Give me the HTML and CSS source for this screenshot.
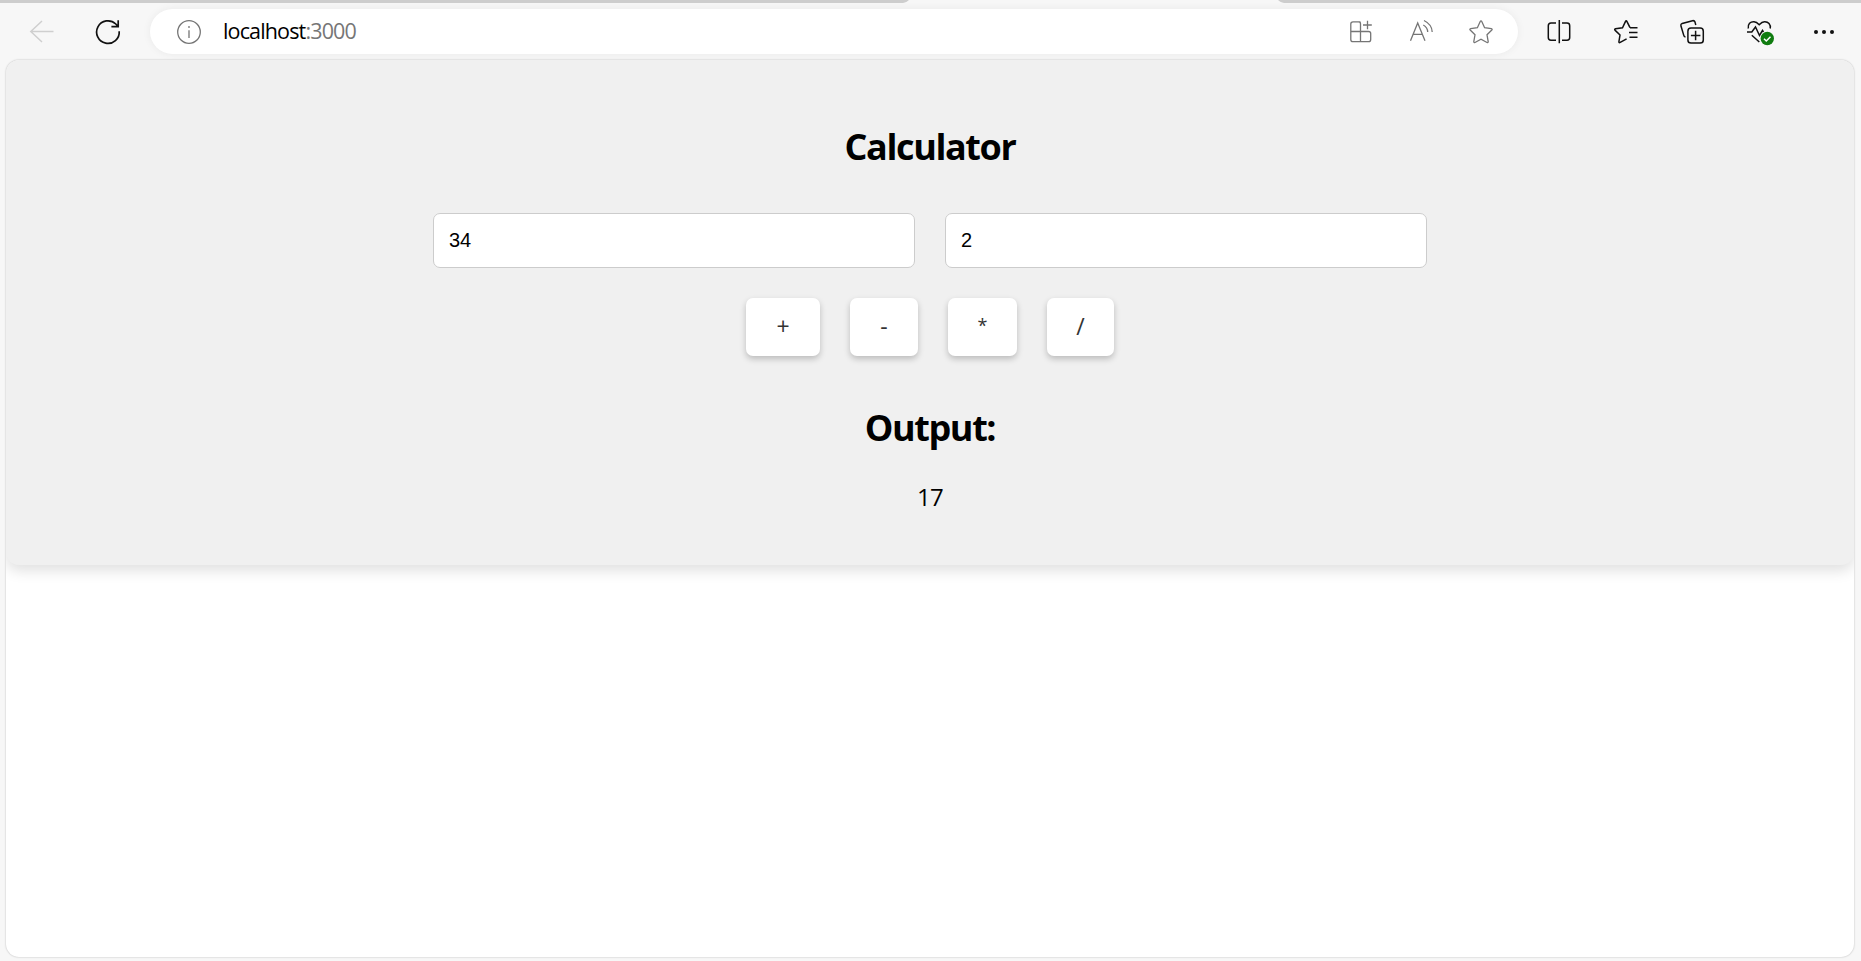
FILE: index.html
```html
<!DOCTYPE html>
<html lang="en">
<head>
<meta charset="utf-8">
<title>Calculator</title>
<link rel="stylesheet" href="styles.css">
</head>
<body>
<div class="browser">
  <div class="tabs">
    <svg class="tab-left" viewBox="0 0 909 3"><path d="M0 0H909Q906 3 903 3H0Z"/></svg>
    <svg class="tab-right" viewBox="0 0 583 3"><path d="M0 0H583V3H6Q3 3 0 0Z"/></svg>
  </div>
  <header class="toolbar">
    <svg class="icon back" viewBox="0 0 24 24"><path d="M23.5 11.5H.8M12 1 .8 11.5 12 22"/></svg>
    <svg class="icon reload" viewBox="0 0 24 24"><path d="M23.2 11.2A11.3 11.3 0 1 1 19.8 4L22 6.3M22.2.3V6.7H15.4"/></svg>
    <div class="address">
      <svg class="icon info" viewBox="0 0 24 24"><circle cx="12" cy="12" r="11.3"/><path d="M12 10.2V18M12 6V8"/></svg>
      <span class="url">localhost<span class="port">:3000</span></span>
      <div class="address-tools">
        <svg class="icon" viewBox="0 0 24 24"><path d="M11.5 1.8H4Q1.8 1.8 1.8 4V19.5Q1.8 21.7 4 21.7H19.5Q21.7 21.7 21.7 19.5V13.5Q21.7 11.5 19.5 11.5H1.8M11.5 21.7V3.8Q11.5 1.8 9.5 1.8M18.5.7V9.2M14 5H22.8"/></svg>
        <svg class="icon" viewBox="0 0 24 24"><path d="M1.5 20.8 8.7 3 16 20.8M4.2 14.3H13.3M14.3 5Q18.6 7.3 18.7 12M15 .5Q23 4.5 23.2 12"/></svg>
        <svg class="icon" viewBox="0 0 24 24"><path d="M12 .9Q12.5.9 12.9 1.7L15.6 7.7 22.3 8.6Q23.7 9 22.8 10L18 14.8 19.2 21.6Q19.1 22.9 18 22.5L12 19.3 6 22.5Q4.9 22.9 4.8 21.6L6 14.8 1.2 10Q.3 9 1.7 8.6L8.4 7.7 11.1 1.7Q11.5.9 12 .9Z"/></svg>
      </div>
    </div>
    <div class="actions">
      <svg class="icon" viewBox="0 0 24 24"><path d="M9 3H4Q1.3 3 1.3 5.7V17.5Q1.3 20.2 4 20.2H9M15 3H20Q22.7 3 22.7 5.7V17.5Q22.7 20.2 20 20.2H15M12.3 0V23.3"/></svg>
      <svg class="icon" viewBox="0 0 24 24"><path d="M16 7.7 13 1.6Q12.2 0 11.4 1.6L8.5 7.7 1.5 8.8Q0 9.2 1.2 10.4L6 15 4.9 21.7Q4.9 23.1 6.2 22.4L12.6 18.9M16 7.7H23.5M15 12.4H23.5M15.5 17.2H23.5"/></svg>
      <svg class="icon" viewBox="0 0 24 24"><path d="M5.5 17.1Q4.1 16.7 3.7 15.1L.9 5.8Q.5 4 2.2 3.4L12.5.7Q14.4.3 15 2.1L15.8 5M11 8.1H20.2Q23.3 8.1 23.3 11.2V19.9Q23.3 23 20.2 23H11Q7.9 23 7.9 19.9V11.2Q7.9 8.1 11 8.1ZM15.6 10.8V20.2M10.9 15.5H20.4"/></svg>
      <svg class="icon health" viewBox="0 0 27 24"><path d="M1.3 8.5C.5 4 3.5 1.5 7 1.7Q9.5 1.8 12.2 4.7Q15 1.8 17.5 1.7C21.2 1.5 24 4.3 23.2 8.5M0 12H4.8L8.5 7 12.5 15.5 15.5 10.5 16.5 12M4.8 15.3 12.3 22"/><circle class="badge" cx="20.3" cy="18.5" r="6.7"/><path class="tick" d="M17 18.7 19.3 21 23.5 16.8"/></svg>
      <svg class="icon dots" viewBox="0 0 24 24"><circle cx="4" cy="12" r="2"/><circle cx="12" cy="12" r="2"/><circle cx="20" cy="12" r="2"/></svg>
    </div>
  </header>
  <main class="page">
    <section class="calculator">
      <h1 class="title">Calculator</h1>
      <div class="inputs">
        <input class="field" type="text" value="34">
        <input class="field" type="text" value="2">
      </div>
      <div class="operators">
        <button class="op plus">+</button>
        <button class="op minus">-</button>
        <button class="op times">*</button>
        <button class="op divide">/</button>
      </div>
      <h2 class="title output">Output:</h2>
      <p class="result">17</p>
    </section>
  </main>
</div>
</body>
</html>
```
FILE: styles.css
```css
* { box-sizing: border-box; }
body { margin: 0; font-family: "Open Sans", "Noto Sans", sans-serif; }
.browser { height: 961px; display: flex; flex-direction: column; background: #f7f7f7; overflow: hidden; }
.tabs { height: 3px; flex: none; display: flex; justify-content: space-between; fill: #cdcdcd; }
.tabs svg { height: 3px; display: block; }
.tab-left { width: 909px; }
.tab-right { width: 583px; }
.toolbar { height: 57px; flex: none; display: flex; align-items: center; padding: 0 25px 0 30px; }
.icon { width: 24px; height: 24px; flex: none; display: block; fill: none; stroke: #111; stroke-width: 1.5; overflow: visible; }
.back { stroke: #cfcfcf; margin-right: 42px; }
.reload { margin-right: 30px; stroke-width: 1.7; }
.address { width: 1368px; height: 45px; flex: none; border-radius: 23px; background: #fff; display: flex; align-items: center; padding: 0 25px 0 27px; box-shadow: 0 0 8px rgba(0, 0, 0, .06); }
.address .icon { stroke: #757575; stroke-width: 1.3; }
.url { margin: 0 0 2px 22px; font: 21.5px/28px "Open Sans", sans-serif; color: #000; letter-spacing: -.85px; }
.port { color: #767676; }
.address-tools { margin-left: auto; display: flex; gap: 36px; }
.actions { margin-left: 29px; display: flex; gap: 42.5px; }
.health { width: 27px; margin-right: -4px; }
.health .badge { fill: #107c10; stroke: none; }
.health .tick { stroke: #fff; }
.dots { fill: #111; stroke: none; }
.page { height: 897px; flex: none; margin: 0 7px 0 6px; background: #fff; border-radius: 13px; overflow: hidden; box-shadow: 0 0 2px rgba(0, 0, 0, .28); }
.calculator { height: 505px; padding-top: 62px; background: #f0f0f0; border-radius: 13px; box-shadow: 0 6px 14px rgba(0, 0, 0, .12); display: flex; flex-direction: column; align-items: center; }
.title { margin: 0; font-size: 36px; line-height: 50px; font-weight: 700; letter-spacing: -1.4px; color: #000; }
.inputs { display: flex; gap: 30px; margin-top: 41px; }
.field { width: 482px; height: 55px; border: 1px solid #ccc; border-radius: 7px; padding: 0 15px; background: #fff; color: #000; font: 20px "Liberation Sans", Arial, sans-serif; }
.operators { display: flex; gap: 30px; margin-top: 30px; }
.op { height: 58px; border: 0; border-radius: 7px; padding: 0 0 2px; background: #fff; color: #333; font: 23px "Open Sans", sans-serif; box-shadow: 0 3px 6px rgba(0, 0, 0, .22); }
.plus { width: 74px; }
.minus { width: 68px; }
.times { width: 69px; padding-bottom: 4px; font-size: 18px; }
.divide { width: 67px; }
.output { margin-top: 47px; }
.result { margin: 24px 0 0; font-size: 24px; line-height: 40px; letter-spacing: -.8px; color: #000; }
```
